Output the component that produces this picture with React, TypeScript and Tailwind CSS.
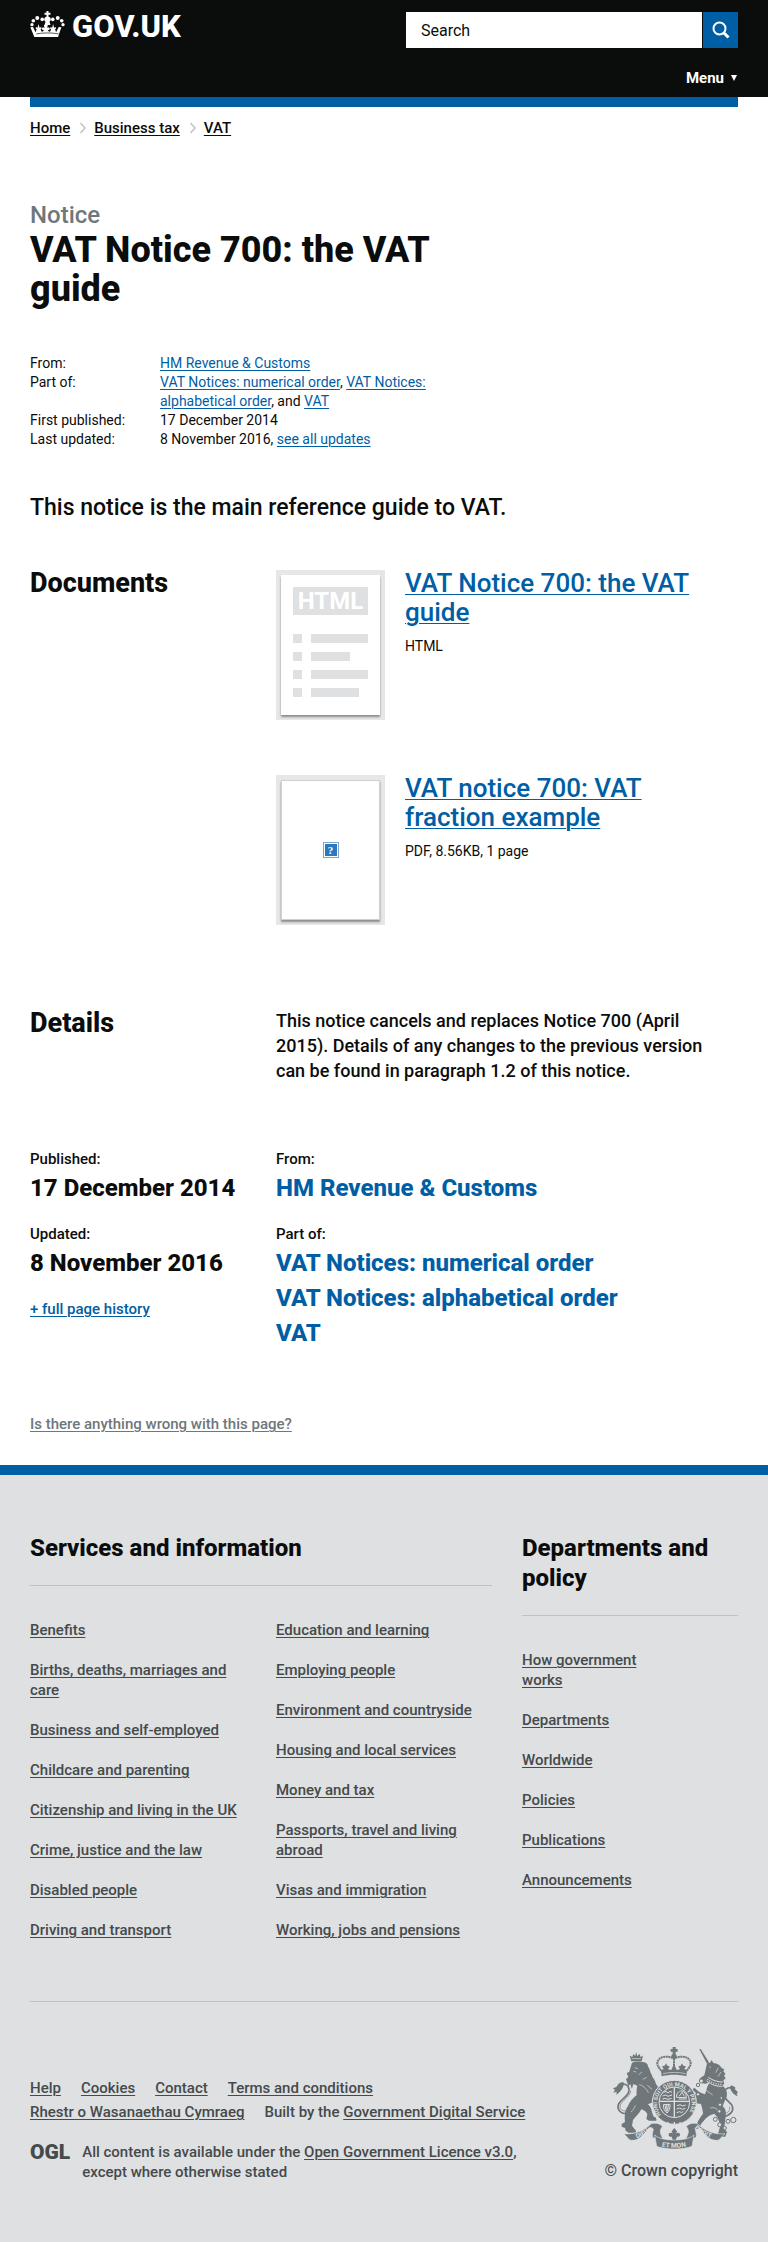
import React from "react";

const serviceColumns: string[][] = [
  [
    "Benefits",
    "Births, deaths, marriages and care",
    "Business and self-employed",
    "Childcare and parenting",
    "Citizenship and living in the UK",
    "Crime, justice and the law",
    "Disabled people",
    "Driving and transport",
  ],
  [
    "Education and learning",
    "Employing people",
    "Environment and countryside",
    "Housing and local services",
    "Money and tax",
    "Passports, travel and living abroad",
    "Visas and immigration",
    "Working, jobs and pensions",
  ],
];

const departmentLinks = [
  "How government works",
  "Departments",
  "Worldwide",
  "Policies",
  "Publications",
  "Announcements",
];

const link = "underline decoration-1 underline-offset-2";
const blueLink = "text-[#005ea5] underline decoration-1 underline-offset-2";

function CrownIcon() {
  return (
    <svg viewBox="91 37 106 78" className="h-[26px] w-[35px]" fill="#fff" aria-hidden="true">
      <path d="M141 37h6v5h6v6h-6v6c5 1 7 4 7 8 0 3-2 5-4 7l3 10h-18l3-10c-2-2-4-4-4-7 0-4 2-7 7-8v-6h-6v-6h6z" />
      {[97, 191].map((x) => <circle key={x} cx={x} cy="78" r="5" />)}
      {[101, 187].map((x) => <circle key={x} cx={x} cy="66" r="5.500" />)}
      {[113, 175].map((x) => <circle key={x} cx={x} cy="58" r="6" />)}
      {[128, 160].map((x) => <circle key={x} cx={x} cy="62" r="5.500" />)}
      <path d="M92 86l8-1 8 16 3-9c-3-1-4-4-2-6 2-1 4 0 5 1l3-11 3 11c1-1 4-2 5-1 2 3 1 5-2 6l3 7c3 1 6-1 7-4-4 0-6-2-6-5s4-5 8-2l-2-9h12l-2 9c4-3 8-1 8 2s-2 5-6 5c1 3 4 5 7 4l3-7c-3-1-4-3-2-6 1-1 4 0 5 1l3-11 3 11c1-1 3-2 5-1 2 2 1 5-2 6l3 9 8-16 8 1-10 29H104z" />
      <path d="M110 106c22-4 46-4 68 0" stroke="#0b0c0c" strokeWidth="2" fill="none" />
    </svg>
  );
}

function Chevron() {
  return (
    <svg viewBox="0 0 6 12" className="h-3 w-1.5" fill="none" stroke="#bfc1c3" strokeWidth="1.500" aria-hidden="true">
      <path d="M0.500 1L5 6L0.500 11" />
    </svg>
  );
}

function RoyalArms() {
  return (
    <svg viewBox="69 51 375 306" className="h-[102px] w-[125px]" fill="#6f777b" aria-hidden="true">
      {/* crown */}
      <path d="M248 51h9v6h6v8h-6v7h-9v-7h-6v-8h6z" />
      <circle cx="252" cy="79" r="8" />
      <path d="M252 86v34M248 84c-24-10-46 0-46 16 0 10 8 15 12 24M256 84c24-10 46 0 46 16 0 10-8 15-12 24" fill="none" stroke="#6f777b" strokeWidth="6" strokeDasharray="6 1.500" />
      <path d="M213 121l8-4-5-8 8-2 4-7 4 7 7 2-5 9 10 2 8-19 8 19 10-2-5-9 7-2 4-7 4 7 8 2-5 8 8 4-2 18c-24-6-50-6-74 0z" />
      <path d="M219 131c22-5 46-5 68 0" fill="none" stroke="#dee0e2" strokeWidth="2" />
      {/* lion */}
      <g transform="translate(54 36)">
        <path d="M70 58l-5-17 8 4 3-9 6 6 2-12 4 12 7-6 3 9 7-4-4 17z" />
        <path d="M71 50h28" stroke="#dee0e2" strokeWidth="2" />
        <path d="M72 62c12-5 26-4 36-1 8 1 12 7 12 13 5 4 4 8 6 12 1 7 6 10 7 18 7 8 9 15 11 22l8 11c8 5 9 12 5 18l-10 3c2 8 0 13-5 17-8 8-16 9-22 12 8 6 11 15 12 24l5 13c6 0 10 5 8 12h-22l-8-5 3-14c-4-9-10-12-18-15-6 13-18 22-25 32l-3 17 7 9c4 2 6 7 4 12H62l-9-6-2-8-10-4v-8l10-6c-2-20 0-36 9-48 5-14 16-24 26-33-1-10 0-20 2-28l-12-5c-2 6-2 10-5 14l-4-14-6 7-3-11-4-10 7-7-5-11 8-5z" />
        <path d="M80 77l10 3M76 88l9 2M92 98l10-8M104 112l12-6M94 128c9 2 20 10 27 24M82 190c-2 8-8 16-13 20M118 130l14 12" fill="none" stroke="#dee0e2" strokeWidth="2" />
        <path d="M56 213c-9 5-26-4-26-19 0-22 31-26 33-48 1-18-19-26-28-14" fill="none" stroke="#6f777b" strokeWidth="5" />
        <path d="M54 207c-10 0-19-5-18-14 2-18 31-26 32-47" fill="none" stroke="#6f777b" strokeWidth="2" />
        <path d="M46 120c-11 1-17 7-21 15l-10 4 6 5-5 8 10-3-1 9c10-5 18-15 23-31z" />
      </g>
      {/* unicorn */}
      <g transform="translate(246 36)">
        <path d="M82 22l4-1 25 40-6 4z" />
        <path d="M105 64l9-2 5-8 5 9c12 0 20 7 25 15l8 4-3 6 7 8-5 4 5 10-7 4 3 12-6 3 11 14c5 12 3 25-4 34l-6 16c8 5 11 17 9 29l-2 17c0 8-2 14-4 19l10 12-5 14h-18l-4-9 6-20c-1-16-5-28-17-40-8 2-18 6-25 14l-15 17-5 13-17 7H57l4-9 12-6c3-15 13-26 20-36-1-12-3-21-7-30-10 2-18-3-22-11l10-5-11-10 10-5-12-11 6-6 12 11 9 5 11 4 5-16c2-8 6-14 9-21l-11 5-12-1-9-6 3-9 13-9z" />
        <path d="M104 117c14 11 30 17 47 16M109 106c14 10 29 14 43 14" fill="none" stroke="#dee0e2" strokeWidth="3" />
        <path d="M106 112c13 10 29 16 45 15" fill="none" stroke="#dee0e2" strokeWidth="4" strokeDasharray="3 4" />
        <path d="M112 75l5 1M139 77l-8 15M147 90l-9 14M115 198c14-4 22 4 28 14M100 143l22 16" fill="none" stroke="#dee0e2" strokeWidth="2" />
        <path d="M151 224c24-2 35-18 30-31-5-14-25-19-25-36 0-20 23-28 29-9" fill="none" stroke="#6f777b" strokeWidth="5" />
        <path d="M156 215c14-2 20-12 16-21" fill="none" stroke="#6f777b" strokeWidth="2" />
        <path d="M178 130l12 6-1 6 9 9-4 4 3 8c-11-3-19-13-24-27z" />
        <g fill="#dee0e2" stroke="#6f777b" strokeWidth="3">
          <circle cx="88" cy="117" r="6" />
          <circle cx="78" cy="129" r="5" />
          <circle cx="78" cy="157" r="5" />
          <circle cx="148" cy="168" r="4" />
          <circle cx="144" cy="188" r="5" />
          <circle cx="142" cy="208" r="5" />
          <circle cx="130" cy="232" r="6" />
          <circle cx="143" cy="248" r="6" />
          <circle cx="158" cy="258" r="5" />
          <circle cx="168" cy="238" r="6" />
          <circle cx="184" cy="234" r="8" />
        </g>
      </g>
      {/* garter and shield */}
      <circle cx="253" cy="217" r="66" stroke="#dee0e2" strokeWidth="3" />
      <circle cx="253" cy="217" r="46" fill="none" stroke="#dee0e2" strokeWidth="3" />
      <path id="garter" d="M216 257A52 52 0 1 1 290 257" fill="none" />
      <text fill="#dee0e2" className="font-[Roboto] text-[17px] font-bold">
        <textPath href="#garter" startOffset="4">HONI SOIT QUI MAL Y PENSE</textPath>
      </text>
      <path d="M253 172v90M208 214h90" stroke="#dee0e2" strokeWidth="4" />
      <g stroke="#dee0e2" strokeWidth="3" fill="none">
        <path d="M220 188l8-4 6 5 6-5 6 3M218 198l9-3 7 4 12-4M217 207l9-2 8 3 11-3" />
        <path d="M260 202c-2-10 6-20 15-19 9 2 15 9 14 20zM268 198l8-11 7 12M266 207h24" />
        <path d="M220 224l20-1c1 12-3 21-9 26-8-6-11-14-11-25zM225 226l4 18M230 225l1 20M235 225l-2 17" />
        <path d="M261 227l9-3 7 4 10-3M260 237l9-3 8 4 9-3M260 248l9-3 6 3 5-4" />
      </g>
      <path d="M233 276l2 5M271 277l-2 5M253 276v6" stroke="#dee0e2" strokeWidth="4" />
      {/* motto scroll */}
      <path d="M101 311c30 4 65-10 82-30 13-4 30 0 34 9-6 7-8 14-4 24l6 14-28-4c-8-4-2-18-1-27-7-7-14-5-17 1-17 25-30 34-50 33-9-3-10-10-22-20z" stroke="#dee0e2" strokeWidth="2" />
      <path d="M405 311c-30 4-65-10-82-30-13-4-30 0-34 9 6 7 8 14 4 24l-6 14 28-4c8-4 2-18 1-27 7-7 14-5 17 1 17 25 30 34 50 33 9-3 10-10 22-20z" stroke="#dee0e2" strokeWidth="2" />
      <path d="M194 315c16 20 101 20 118 0l-6 34c-26 11-80 11-106 0z" stroke="#dee0e2" strokeWidth="2" />
      <path d="M253 294l8 10-4 9c4-7 13-5 13 1 0 5-4 7-9 6l-3 9h-10l-3-9c-5 1-9-1-9-6 0-6 9-8 13-1l-4-9z" />
      <path id="mottoLeft" d="M138 326Q165 318 188 293" fill="none" />
      <path id="mottoMid" d="M209 349Q253 358 299 348" fill="none" />
      <path id="mottoRight" d="M310 292Q335 318 368 326" fill="none" />
      <g fill="#dee0e2" className="font-[Roboto] text-[20px] font-bold">
        <text><textPath href="#mottoLeft" startOffset="2">DIEU</textPath></text>
        <text><textPath href="#mottoMid" startOffset="6">ET MON</textPath></text>
        <text><textPath href="#mottoRight" startOffset="4">DROIT</textPath></text>
      </g>
    </svg>
  );
}

function HtmlThumbnail() {
  return (
    <div className="h-[150px] w-[109px] shrink-0 bg-[#e7e7e7] p-[5px]">
      <div className="h-full bg-white px-3 pt-3 shadow-[0_2px_2px_rgba(0,0,0,0.4)]">
        <div className="flex h-7 items-center justify-center bg-[#dee0e2] text-[24px] leading-7 font-bold text-white">
          HTML
        </div>
        <div className="mt-[19px] flex flex-col gap-[9px]">
          {["w-[57px]", "w-[39px]", "w-[57px]", "w-[48px]"].map((width, i) => (
            <div key={i} className="flex gap-[9px]">
              <span className="size-[9px] bg-[#dee0e2]" />
              <span className={`h-[9px] bg-[#dee0e2] ${width}`} />
            </div>
          ))}
        </div>
      </div>
    </div>
  );
}

function PdfThumbnail() {
  return (
    <div className="h-[150px] w-[109px] shrink-0 bg-[#e7e7e7] p-[5px]">
      <div className="flex h-full items-center justify-center border border-[#d0d0d0] bg-white shadow-[0_2px_2px_rgba(0,0,0,0.4)]">
        <span className="flex size-4 items-center justify-center border border-[#7fa5cf] bg-white p-px">
          <span className="flex size-3 items-center justify-center bg-[#2a78bd] font-['Liberation_Serif',serif] text-[11px] leading-3 font-bold text-white">
            ?
          </span>
        </span>
      </div>
    </div>
  );
}

function Attachment({ title, meta, children }: { title: string; meta: string; children: React.ReactNode }) {
  return (
    <div className="flex gap-5">
      <div className="pt-0.5">{children}</div>
      <div className="pt-px pr-6">
        <h3 className="text-[26px] leading-[29px]">
          <a href="#" className={blueLink}>{title}</a>
        </h3>
        <p className="mt-2.5 text-[14px] leading-[19px] font-normal">{meta}</p>
      </div>
    </div>
  );
}

function FooterLinks({ items, className = "" }: { items: string[]; className?: string }) {
  return (
    <ul className={`flex flex-col gap-5 ${className}`}>
      {items.map((item) => (
        <li key={item}>
          <a href="#" className={link}>{item}</a>
        </li>
      ))}
    </ul>
  );
}

export default function App() {
  return (
    <div className="bg-white font-[Roboto,sans-serif]">
      <div className="text-[15px] leading-5 font-medium text-[#0b0c0c]">
        <header className="bg-[#0b0c0c] px-[30px]">
          <div className="flex items-start justify-between text-white">
            <a href="#" className="flex items-start gap-[7px] pt-[11px] text-[31px] leading-8 font-extrabold">
              <CrownIcon />
              GOV.UK
            </a>
            <div className="flex w-[332px] flex-col items-end pt-3 pb-[9px]">
              <form className="flex w-full gap-px" onSubmit={(e) => e.preventDefault()}>
                <input
                  type="search"
                  aria-label="Search"
                  placeholder="Search"
                  className="h-9 min-w-0 flex-1 bg-white px-[15px] text-[16px] font-normal text-[#0b0c0c] outline-none placeholder:text-[#0b0c0c] placeholder:opacity-100"
                />
                <button type="submit" aria-label="Search" className="flex h-9 w-[35px] items-center justify-center bg-[#005ea5]">
                  <svg viewBox="0 0 18 18" className="size-[18px]" fill="none" stroke="#fff" aria-hidden="true">
                    <circle cx="7.500" cy="7.500" r="6" strokeWidth="2" />
                    <path d="M12 12l4.500 4.500" strokeWidth="3" />
                  </svg>
                </button>
              </form>
              <button type="button" className="mt-5 flex items-center gap-[7px] font-bold">
                Menu
                <svg viewBox="0 0 6 6" className="mr-px size-1.5" fill="#fff" aria-hidden="true">
                  <path d="M0 0h6L3 6z" />
                </svg>
              </button>
            </div>
          </div>
        </header>

        <div className="px-[30px]">
          <div className="h-2.5 bg-[#005ea5]" />
          <nav aria-label="Breadcrumb" className="pt-[11px]">
            <ol className="flex items-center">
              <li className="flex items-center gap-2.5 pr-2"><a href="#" className={link}>Home</a><Chevron /></li>
              <li className="flex items-center gap-2.5 pr-2"><a href="#" className={link}>Business tax</a><Chevron /></li>
              <li><a href="#" className={link}>VAT</a></li>
            </ol>
          </nav>
        </div>

        <main className="px-[30px] pt-[62px] pb-[31px]">
          <div className="max-w-[462px]">
            <p className="text-[24px] leading-[30px] text-[#6f777b]">Notice</p>
            <h1 className="pt-px text-[36px] leading-[39px] font-extrabold">VAT Notice 700: the VAT guide</h1>
            <dl className="mt-[45px] grid grid-cols-[130px_1fr] text-[14px] leading-[19px] font-normal">
              <dt>From:</dt>
              <dd><a href="#" className={blueLink}>HM Revenue &amp; Customs</a></dd>
              <dt>Part of:</dt>
              <dd>
                <a href="#" className={blueLink}>VAT Notices: numerical order</a>,{" "}
                <a href="#" className={blueLink}>VAT Notices: alphabetical order</a>, and{" "}
                <a href="#" className={blueLink}>VAT</a>
              </dd>
              <dt>First published:</dt>
              <dd>17 December 2014</dd>
              <dt>Last updated:</dt>
              <dd>8 November 2016, <a href="#" className={blueLink}>see all updates</a></dd>
            </dl>
          </div>
          <p className="mt-11 text-[23px] leading-[30px]">This notice is the main reference guide to VAT.</p>

          <section className="mt-[45px] grid grid-cols-3 gap-x-[30px]">
            <h2 className="text-[27px] leading-[30px] font-extrabold">Documents</h2>
            <div className="col-span-2 flex flex-col gap-[53px]">
              <Attachment title="VAT Notice 700: the VAT guide" meta="HTML"><HtmlThumbnail /></Attachment>
              <Attachment title="VAT notice 700: VAT fraction example" meta="PDF, 8.56KB, 1 page"><PdfThumbnail /></Attachment>
            </div>
          </section>

          <section className="mt-[83px] grid grid-cols-3 gap-x-[30px]">
            <h2 className="text-[27px] leading-[30px] font-extrabold">Details</h2>
            <p className="col-span-2 pr-5 text-[18px] leading-[25px]">
              This notice cancels and replaces Notice 700 (April 2015). Details of any changes to the previous version can be found in paragraph 1.2 of this notice.
            </p>
          </section>

          <section className="mt-[66px] grid grid-cols-3 gap-x-[30px]">
            <div>
              <dl>
                <dt>Published:</dt>
                <dd className="mt-1 text-[24px] leading-[30px] font-extrabold">17 December 2014</dd>
                <dt className="mt-[21px]">Updated:</dt>
                <dd className="mt-1 text-[24px] leading-[30px] font-extrabold">8 November 2016</dd>
              </dl>
              <a href="#" className={`mt-[21px] inline-block ${blueLink}`}>+ full page history</a>
            </div>
            <dl className="col-span-2">
              <dt>From:</dt>
              <dd className="mt-1 text-[24px] leading-[30px] font-extrabold">
                <a href="#" className="text-[#005ea5]">HM Revenue &amp; Customs</a>
              </dd>
              <dt className="mt-[21px]">Part of:</dt>
              <dd className="mt-1">
                <ul className="flex flex-col gap-[5px] text-[24px] leading-[30px] font-extrabold">
                  {["VAT Notices: numerical order", "VAT Notices: alphabetical order", "VAT"].map((item) => (
                    <li key={item}>
                      <a href="#" className="text-[#005ea5]">{item}</a>
                    </li>
                  ))}
                </ul>
              </dd>
            </dl>
          </section>

          <p className="mt-[66px]">
            <a href="#" className="text-[#6f777b] underline decoration-1 underline-offset-2">Is there anything wrong with this page?</a>
          </p>
        </main>

        <footer className="border-t-[10px] border-[#005ea5] bg-[#dee0e2] px-[30px] pt-[58px] pb-[60px] text-[#454a4c]">
          <div className="grid grid-cols-3 gap-x-[30px]">
            <div className="col-span-2">
              <h2 className="border-b border-[#bfc1c3] pb-[22px] text-[24px] leading-[30px] font-extrabold text-[#0b0c0c]">
                Services and information
              </h2>
              <div className="mt-[34px] grid grid-cols-2 gap-x-[30px]">
                {serviceColumns.map((items) => (
                  <FooterLinks key={items[0]} items={items} />
                ))}
              </div>
            </div>
            <div>
              <h2 className="border-b border-[#bfc1c3] pb-[22px] text-[24px] leading-[30px] font-extrabold text-[#0b0c0c]">
                Departments and policy
              </h2>
              <FooterLinks items={departmentLinks} className="mt-[34px] w-3/5" />
            </div>
          </div>

          <div className="mt-[61px] flex items-start justify-between border-t border-[#bfc1c3]">
            <div className="max-w-[520px] pt-[74px]">
              <ul className="flex flex-wrap gap-x-5 leading-6">
                {["Help", "Cookies", "Contact", "Terms and conditions", "Rhestr o Wasanaethau Cymraeg"].map((item) => (
                  <li key={item}><a href="#" className={link}>{item}</a></li>
                ))}
                <li>Built by the <a href="#" className={link}>Government Digital Service</a></li>
              </ul>
              <div className="mt-[18px] flex gap-3">
                <span className="w-[41px] text-[21px] font-black">OGL</span>
                <p>
                  All content is available under the <a href="#" className={link}>Open Government Licence v3.0</a>, except where otherwise stated
                </p>
              </div>
            </div>
            <a href="#" className="flex shrink-0 flex-col items-end gap-3 pt-[45px] text-[16px] whitespace-nowrap">
              <RoyalArms />
              © Crown copyright
            </a>
          </div>
        </footer>
      </div>
    </div>
  );
}
